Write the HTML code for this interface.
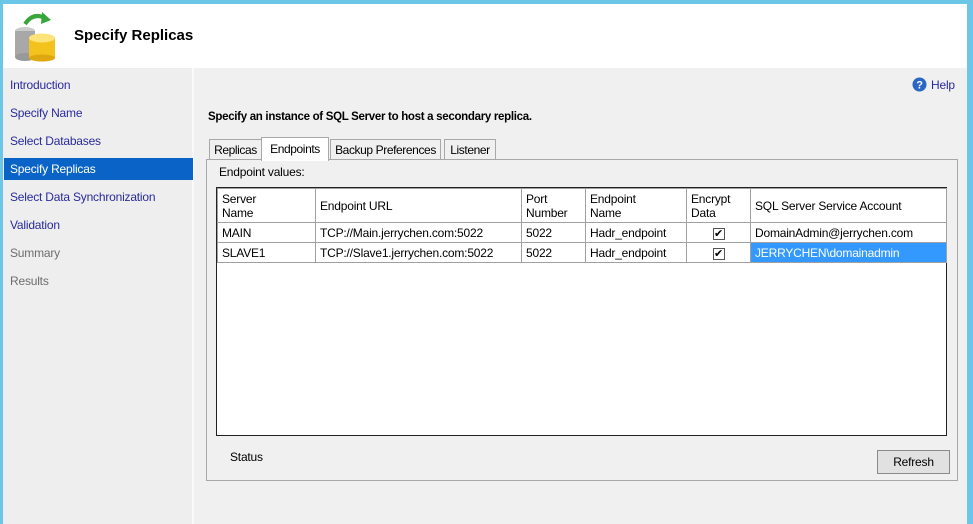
<!DOCTYPE html>
<html><head><style>
*{margin:0;padding:0;box-sizing:border-box}
body{width:973px;height:524px;background:#6cc6e8;font-family:"Liberation Sans",sans-serif;font-size:12px;color:#000;position:relative;overflow:hidden;letter-spacing:-0.2px}
.a{position:absolute;white-space:nowrap}
#win{left:3px;top:4px;width:964px;height:520px;background:#f0f0f0}
#hdr{left:0;top:0;width:964px;height:64px;background:#fff}
#nav{left:0;top:64px;width:191px;height:456px;background:#eeeeee;border-right:2px solid #fafafa}
.n{position:absolute;left:10px;color:#2a2a9c;font-size:12px;white-space:nowrap}
.g{color:#6d6d6d}
#sel{left:4px;top:158px;width:189px;height:22px;background:#0a64c8}
.tab{position:absolute;top:139px;height:21px;border:1px solid #a8a8a8;background:#f0f0f0;padding:3px 0 0;font-size:12px;text-align:center;white-space:nowrap;letter-spacing:-0.4px}
table{border-collapse:collapse;position:absolute;left:217px;top:188px;background:#fff;table-layout:fixed}
td{border:1px solid #a0a0a0;padding:0 0 0 4px;font-size:12px;height:20px;vertical-align:middle;white-space:nowrap;overflow:hidden}
tr.h td{height:34px;line-height:14px}
.cb{display:inline-block;width:12px;height:12px;border:1px solid #555;font-size:11px;line-height:10px;text-align:center;background:#fff}
</style></head><body>
<div class="a" id="win">
 <div class="a" id="hdr">
  <svg class="a" style="left:10px;top:6px" width="46" height="52" viewBox="0 0 46 52">
   <path d="M12 14 Q20 2 32 8" stroke="#3aa53a" stroke-width="4" fill="none"/>
   <path d="M29 2 L38 10 L28 14Z" fill="#3aa53a"/>
   <ellipse cx="12" cy="21" rx="10" ry="4" fill="#ccc"/>
   <rect x="2" y="21" width="20" height="26" fill="#a8a8a8"/>
   <ellipse cx="12" cy="47" rx="10" ry="4" fill="#999"/>
   <rect x="16" y="28" width="26" height="20" fill="#f3c21c"/>
   <ellipse cx="29" cy="28" rx="13" ry="4.5" fill="#fde37a"/>
   <ellipse cx="29" cy="48" rx="13" ry="3.5" fill="#e0a810"/>
  </svg>
  <div class="a" style="left:71px;top:23px;font-size:15px;font-weight:bold;letter-spacing:0">Specify Replicas</div>
 </div>
 <div class="a" id="nav"></div>
</div>
<div class="a" id="sel"></div>
<div class="n" style="top:78px">Introduction</div>
<div class="n" style="top:106px">Specify Name</div>
<div class="n" style="top:134px">Select Databases</div>
<div class="n" style="top:162px;color:#fff">Specify Replicas</div>
<div class="n" style="top:190px">Select Data Synchronization</div>
<div class="n" style="top:218px">Validation</div>
<div class="n g" style="top:246px">Summary</div>
<div class="n g" style="top:274px">Results</div>
<svg class="a" style="left:912px;top:77px" width="15" height="15"><circle cx="7.5" cy="7.5" r="7" fill="#2a66c4"/><text x="7.5" y="11.5" font-size="11" font-weight="bold" fill="#fff" text-anchor="middle" font-family="Liberation Sans">?</text></svg>
<div class="a" style="left:931px;top:78px;color:#2a2a9c">Help</div>
<div class="a" style="left:208px;top:111px;font-weight:bold;font-size:11.5px;letter-spacing:-0.3px">Specify an instance of SQL Server to host a secondary replica.</div>
<div class="a" style="left:206px;top:159px;width:752px;height:322px;border:1px solid #a8a8a8;background:#f0f0f0"></div>
<div class="tab" style="left:209px;width:53px">Replicas</div>
<div class="tab" style="left:330px;width:111px">Backup Preferences</div>
<div class="tab" style="left:444px;width:52px">Listener</div>
<div class="tab" style="left:261px;top:137px;height:24px;width:68px;background:#fff;border-bottom:none;padding-top:4px;z-index:2">Endpoints</div>
<div class="a" style="left:219px;top:165px">Endpoint values:</div>
<div class="a" style="left:216px;top:187px;width:731px;height:249px;border:1px solid #222;background:#fff"></div>
<table>
<colgroup><col style="width:98px"><col style="width:206px"><col style="width:64px"><col style="width:101px"><col style="width:64px"><col style="width:196px"></colgroup>
<tr class="h"><td>Server<br>Name</td><td>Endpoint URL</td><td>Port<br>Number</td><td>Endpoint<br>Name</td><td>Encrypt<br>Data</td><td>SQL Server Service Account</td></tr>
<tr><td>MAIN</td><td>TCP://Main.jerrychen.com:5022</td><td>5022</td><td>Hadr_endpoint</td><td style="text-align:center;padding:0"><span class="cb">✔</span></td><td>DomainAdmin@jerrychen.com</td></tr>
<tr><td>SLAVE1</td><td>TCP://Slave1.jerrychen.com:5022</td><td>5022</td><td>Hadr_endpoint</td><td style="text-align:center;padding:0"><span class="cb">✔</span></td><td style="background:#3399ff;color:#fff">JERRYCHEN\domainadmin</td></tr>
</table>
<div class="a" style="left:230px;top:450px">Status</div>
<div class="a" style="left:877px;top:450px;width:73px;height:24px;border:1px solid #8a8a8a;background:#e1e1e1;text-align:center;line-height:22px">Refresh</div>
</body></html>
